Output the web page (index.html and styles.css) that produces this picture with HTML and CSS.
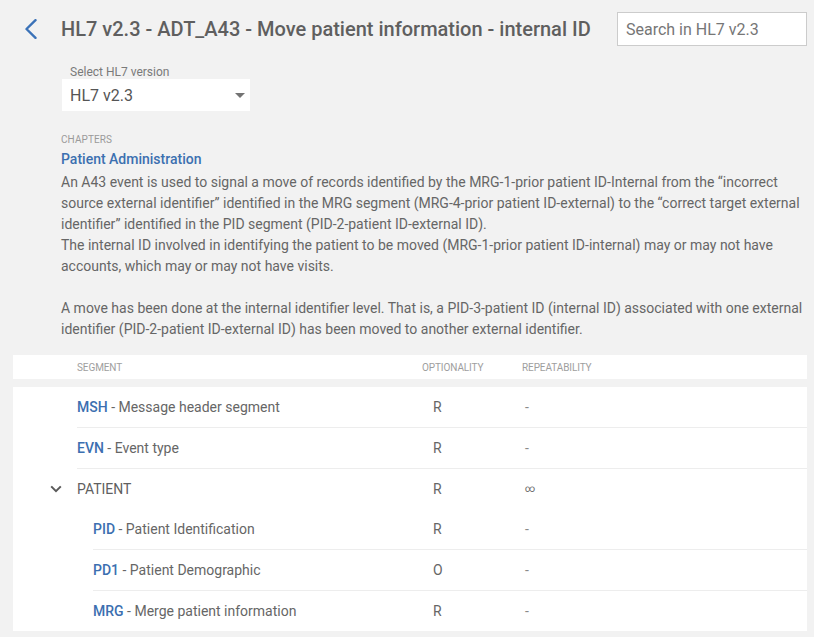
FILE: index.html
```html
<!DOCTYPE html>
<html lang="en">
<head>
<meta charset="utf-8">
<title>HL7 v2.3 - ADT_A43</title>
<link rel="stylesheet" href="styles.css">
</head>
<body>
<header class="topbar">
  <a class="back" href="#" aria-label="Back">
    <svg width="14" height="20" viewBox="0 0 14 20"><path d="M11.5 1.2 L2.5 10 L11.5 18.8" fill="none" stroke="#3b72b8" stroke-width="2.4" stroke-linecap="round" stroke-linejoin="round"/></svg>
  </a>
  <h1 class="title">HL7 v2.3 - ADT_A43 - Move patient information - internal ID</h1>
  <input class="search" type="text" placeholder="Search in HL7 v2.3">
</header>

<section class="version">
  <div class="version-label">Select HL7 version</div>
  <div class="version-select">
    <span>HL7 v2.3</span>
    <span class="caret"></span>
  </div>
</section>

<section class="intro">
  <div class="chapters">CHAPTERS</div>
  <div class="chapter-name">Patient Administration</div>
  <p class="desc">An A43 event is used to signal a move of records identified by the MRG-1-prior patient ID-Internal from the “incorrect source external identifier” identified in the MRG segment (MRG-4-prior patient ID-external) to the “correct target external identifier” identified in the PID segment (PID-2-patient ID-external ID).<br>The internal ID involved in identifying the patient to be moved (MRG-1-prior patient ID-internal) may or may not have accounts, which may or may not have visits.<br><br>A move has been done at the internal identifier level. That is, a PID-3-patient ID (internal ID) associated with one external identifier (PID-2-patient ID-external ID) has been moved to another external identifier.</p>
</section>

<section class="table">
  <div class="thead">
    <div class="gutter"></div>
    <div class="cells">
      <div class="c-seg">Segment</div>
      <div class="c-opt">Optionality</div>
      <div class="c-rep">Repeatability</div>
    </div>
  </div>
  <div class="tbody">
    <div class="row">
      <div class="gutter"></div>
      <div class="cells line">
        <div class="c-seg"><span class="code">MSH</span> - Message header segment</div>
        <div class="c-opt val">R</div>
        <div class="c-rep rep">-</div>
      </div>
    </div>
    <div class="row">
      <div class="gutter"></div>
      <div class="cells line">
        <div class="c-seg"><span class="code">EVN</span> - Event type</div>
        <div class="c-opt val">R</div>
        <div class="c-rep rep">-</div>
      </div>
    </div>
    <div class="row group">
      <div class="gutter toggle">
        <svg width="12" height="8" viewBox="0 0 12 8"><path d="M1.2 1.4 L6 6.2 L10.8 1.4" fill="none" stroke="#5a5a5a" stroke-width="2"/></svg>
      </div>
      <div class="cells">
        <div class="c-seg group-name">PATIENT</div>
        <div class="c-opt val">R</div>
        <div class="c-rep inf">∞</div>
      </div>
    </div>
    <div class="row nested">
      <div class="gutter"></div>
      <div class="cells line">
        <div class="c-seg"><span class="code">PID</span> - Patient Identification</div>
        <div class="c-opt val">R</div>
        <div class="c-rep rep">-</div>
      </div>
    </div>
    <div class="row nested">
      <div class="gutter"></div>
      <div class="cells line">
        <div class="c-seg"><span class="code">PD1</span> - Patient Demographic</div>
        <div class="c-opt val">O</div>
        <div class="c-rep rep">-</div>
      </div>
    </div>
    <div class="row nested">
      <div class="gutter"></div>
      <div class="cells">
        <div class="c-seg"><span class="code">MRG</span> - Merge patient information</div>
        <div class="c-opt val">R</div>
        <div class="c-rep rep">-</div>
      </div>
    </div>
  </div>
</section>
</body>
</html>
```

FILE: styles.css
```css
* { box-sizing: border-box; }

html, body {
  margin: 0;
  padding: 0;
  background: #f2f2f2;
}

body {
  font-family: Roboto, "Liberation Sans", Arial, sans-serif;
  color: #666666;
  width: 814px;
  height: 637px;
  overflow: hidden;
}

/* ---------- top bar ---------- */
.topbar {
  display: flex;
  align-items: center;
  height: 34px;
  margin-top: 12px;
  padding: 0 7px 0 24px;
}

.back {
  display: flex;
  width: 14px;
  height: 20px;
  margin-right: 23px;
}

.title {
  margin: 0;
  font-size: 20px;
  font-weight: 500;
  color: #5f5f5f;
  white-space: nowrap;
  letter-spacing: 0;
}

.search {
  margin-left: auto;
  width: 190px;
  height: 34px;
  border: 1px solid #cccccc;
  background: #ffffff;
  padding: 0 8px;
  font-family: Roboto, "Liberation Sans", Arial, sans-serif;
  font-size: 16px;
  color: #555;
  outline: none;
}

.search::placeholder {
  color: #767676;
}

/* ---------- version select ---------- */
.version {
  margin: 19px 0 0 62px;
  width: 188px;
}

.version-label {
  font-size: 12px;
  line-height: 14px;
  color: #7a7a7a;
  padding-left: 8px;
}

.version-select {
  display: flex;
  align-items: center;
  justify-content: space-between;
  height: 32px;
  background: #ffffff;
  padding: 0 5px 0 8px;
  font-size: 16px;
  color: #555555;
}

.caret {
  width: 0;
  height: 0;
  border-left: 5px solid transparent;
  border-right: 5px solid transparent;
  border-top: 5px solid #737373;
  margin-top: 1px;
}

/* ---------- intro ---------- */
.intro {
  margin: 23px 7px 0 61px;
}

.chapters {
  font-size: 10px;
  line-height: 12px;
  color: #9a9a9a;
  letter-spacing: 0.1px;
}

.chapter-name {
  margin-top: 2px;
  font-size: 14px;
  line-height: 22px;
  font-weight: 500;
  color: #3c70b0;
}

.desc {
  margin: 0;
  padding-top: 2px;
  width: 746px;
  font-size: 14px;
  line-height: 21px;
  color: #666666;
}

/* ---------- table ---------- */
.table {
  margin: 15px 7px 0 13px;
}

.thead,
.row {
  display: flex;
}

.thead {
  background: #ffffff;
  height: 24px;
  align-items: center;
}

.gutter {
  width: 64px;
  flex: none;
}

.cells {
  flex: 1;
  display: flex;
  align-items: center;
}

.c-seg { width: 345px; flex: none; }
.c-opt { width: 100px; flex: none; }
.c-rep { flex: 1; }

.thead .cells {
  font-size: 10px;
  color: #9e9e9e;
  text-transform: uppercase;
  letter-spacing: -0.1px;
}

.tbody {
  margin-top: 8px;
  background: #ffffff;
}

.row .cells {
  height: 40px;
  font-size: 14px;
}

.row .cells.line {
  height: 41px;
  border-bottom: 1px solid #ededed;
}

.row.nested .gutter { width: 80px; }
.row.nested .c-seg { width: 329px; }

.toggle {
  display: flex;
  align-items: center;
  justify-content: flex-end;
  padding-right: 15px;
}

.code {
  color: #3c6fb0;
  font-weight: 500;
}

.group-name {
  color: #5f5f5f;
}

.val {
  padding-left: 11px;
  color: #666666;
}

.rep {
  padding-left: 3px;
  color: #8a8a8a;
}

.inf {
  font-size: 10px;
  padding-left: 3px;
  color: #666666;
  padding-bottom: 1px;
}
```
